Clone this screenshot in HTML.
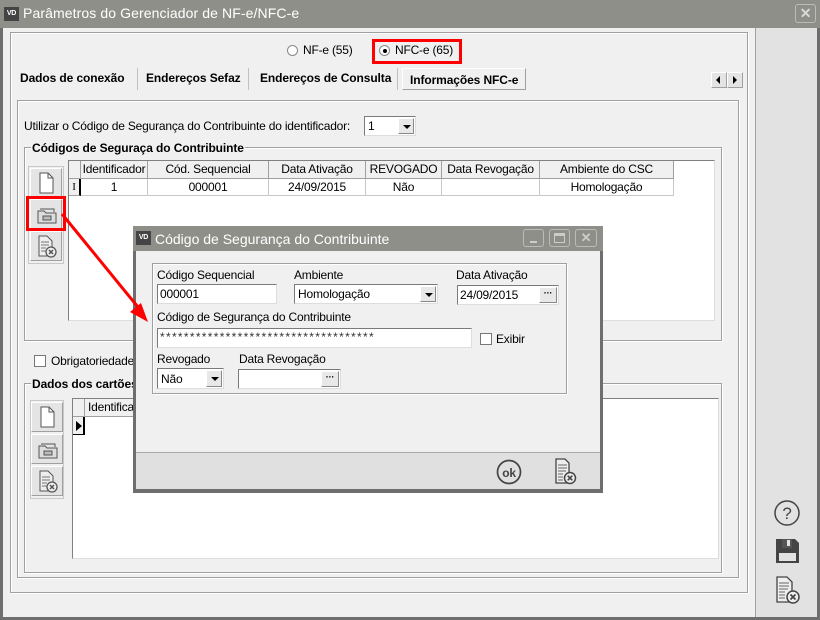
<!DOCTYPE html>
<html><head><meta charset="utf-8">
<style>
*{box-sizing:border-box;margin:0;padding:0}
body{width:820px;height:620px;overflow:hidden;background:#6e6e6e;font-family:"Liberation Sans",sans-serif;font-size:12px;letter-spacing:-0.2px;color:#000;position:relative}
.a{position:absolute}
.f{border:1px solid #a0a0a0;box-shadow:1px 1px 0 #fff, inset 1px 1px 0 #fff}
.in{background:#fff;border:1px solid #7a7a7a;border-right-color:#ddd;border-bottom-color:#ddd}
.btn{background:#e4e4e4;border:1px solid #fff;border-right-color:#a0a0a0;border-bottom-color:#a0a0a0}
.hd{background:#f0f0f0;border-right:1px solid #a0a0a0;border-bottom:1px solid #a0a0a0;text-align:center;line-height:17px;height:18px}
.cl{text-align:center;line-height:17px;height:17px;border-right:1px solid #c8c8c8;border-bottom:1px solid #c8c8c8}
.b{font-weight:bold;letter-spacing:-0.1px}
.dd{position:absolute;right:1px;top:1px;width:16px;background:#e8e8e8;border:1px solid #fff;border-right-color:#888;border-bottom-color:#888}
.dd:after{content:"";position:absolute;left:4px;top:6px;border:4px solid transparent;border-top:4px solid #000;border-bottom:0}
.dots{position:absolute;right:1px;top:1px;width:18px;background:#e8e8e8;border:1px solid #fff;border-right-color:#888;border-bottom-color:#888;font-size:9px;font-weight:bold;text-align:center;line-height:11px}
</style></head><body>
<div class="a" style="left:0;top:0;width:820px;height:28px;background:#8f8f8a"></div>
<div class="a" style="left:4px;top:7px;width:15px;height:14px;background:#444;color:#fff;font-size:7px;line-height:14px;text-align:center;font-weight:bold">VD</div>
<div class="a" style="left:23px;top:5px;font-size:14px;color:#fff;letter-spacing:0.1px">Parâmetros do Gerenciador de NF-e/NFC-e</div>
<div class="a" style="left:795px;top:4px;width:21px;height:19px;border:1px solid #bbb;border-radius:3px;background:#8f8f8a;color:#d8d8d8;font-weight:bold;text-align:center;line-height:17px;font-size:14px">✕</div>
<div class="a" style="left:3px;top:28px;width:814px;height:589px;background:#f0f0f0"></div>
<div class="a" style="left:755px;top:28px;width:62px;height:589px;background:#e2e2e2;border-left:1px solid #a0a0a0"></div>
<div class="a f" style="left:10px;top:32px;width:738px;height:561px"></div>
<div class="a f" style="left:17px;top:100px;width:722px;height:478px"></div>
<div class="a" style="left:287px;top:45px;width:11px;height:11px;border:1px solid #888;border-radius:50%;background:#fff"></div>
<div class="a" style="left:303px;top:43px">NF-e (55)</div>
<div class="a" style="left:372px;top:39px;width:90px;height:25px;border:3px solid #f00"></div>
<div class="a" style="left:379px;top:45px;width:11px;height:11px;border:1px solid #888;border-radius:50%;background:#fff"></div>
<div class="a" style="left:383px;top:49px;width:4px;height:4px;border-radius:50%;background:#000"></div>
<div class="a" style="left:395px;top:43px">NFC-e (65)</div>
<div class="a b" style="left:20px;top:71px">Dados de conexão</div>
<div class="a" style="left:137px;top:68px;height:22px;border-left:1px solid #c0c0c0"></div>
<div class="a b" style="left:146px;top:71px">Endereços Sefaz</div>
<div class="a" style="left:248px;top:68px;height:22px;border-left:1px solid #c0c0c0"></div>
<div class="a b" style="left:260px;top:71px">Endereços de Consulta</div>
<div class="a" style="left:397px;top:68px;height:22px;border-left:1px solid #c0c0c0"></div>
<div class="a b" style="left:402px;top:68px;width:124px;height:22px;border:1px solid #a0a0a0;border-top-color:#fff;border-left-color:#fff;padding:4px 0 0 7px;background:#f0f0f0">Informações NFC-e</div>
<div class="a btn" style="left:711px;top:72px;width:16px;height:16px"><div class="a" style="left:4px;top:3px;border:4px solid transparent;border-right:4px solid #000;border-left:0"></div></div>
<div class="a btn" style="left:727px;top:72px;width:16px;height:16px"><div class="a" style="left:5px;top:3px;border:4px solid transparent;border-left:4px solid #000;border-right:0"></div></div>
<div class="a" style="left:24px;top:119px">Utilizar o Código de Segurança do Contribuinte do identificador:</div>
<div class="a in" style="left:364px;top:116px;width:52px;height:20px;padding:2px 3px">1<div class="dd" style="height:16px"></div></div>
<div class="a f" style="left:24px;top:147px;width:698px;height:194px"></div>
<div class="a b" style="left:31px;top:141px;background:#f0f0f0;padding:0 1px">Códigos de Seguraça do Contribuinte</div>
<svg width="0" height="0" style="position:absolute"><defs>
<g id="doc"><path d="M9 4h8l5 5v15H9z" fill="#fff" stroke="#555"/><path d="M17 4v5h5" fill="none" stroke="#555"/></g>
<g id="fold"><path d="M7 11h6l2 2h10v10H7z" fill="#ddd" stroke="#555"/><path d="M9 9h14v3" fill="none" stroke="#555"/><rect x="12" y="16" width="8" height="4" fill="#bbb" stroke="#555"/></g>
<g id="del"><path d="M8 4h8l5 5v15H8z" fill="#eee" stroke="#555"/><path d="M10 10h8M10 13h8M10 16h5M10 19h5" stroke="#777"/><circle cx="20" cy="20" r="5" fill="#eee" stroke="#555" stroke-width="1.3"/><path d="M18 18l4 4M22 18l-4 4" stroke="#555" stroke-width="1.5"/></g>
</defs></svg>
<div class="a" style="left:28px;top:166px;width:36px;height:98px;border:1px solid #c8c8c8"></div>
<div class="a btn" style="left:30px;top:168px;width:32px;height:30px"><svg width="30" height="28"><use href="#doc"/></svg></div>
<div class="a btn" style="left:30px;top:199px;width:32px;height:30px"><svg width="30" height="28"><use href="#fold"/></svg></div>
<div class="a btn" style="left:30px;top:231px;width:32px;height:30px"><svg width="30" height="28"><use href="#del"/></svg></div>
<div class="a" style="left:26px;top:196px;width:40px;height:35px;border:3px solid #f00"></div>
<div class="a" style="left:68px;top:160px;width:647px;height:161px;background:#fff;border:1px solid #808080;border-right-color:#ddd;border-bottom-color:#ddd"></div>
<div class="a hd" style="left:69px;top:161px;width:12px"></div>
<div class="a hd" style="left:81px;top:161px;width:67px">Identificador</div>
<div class="a hd" style="left:148px;top:161px;width:121px">Cód. Sequencial</div>
<div class="a hd" style="left:269px;top:161px;width:97px">Data Ativação</div>
<div class="a hd" style="left:366px;top:161px;width:76px">REVOGADO</div>
<div class="a hd" style="left:442px;top:161px;width:98px">Data Revogação</div>
<div class="a hd" style="left:540px;top:161px;width:134px">Ambiente do CSC</div>
<div class="a" style="left:69px;top:179px;width:12px;height:17px;background:#f0f0f0;border-right:2px solid #000;border-bottom:1px solid #a0a0a0;font-size:11px;text-align:center;line-height:16px;font-family:'Liberation Serif'">I</div>
<div class="a cl" style="left:81px;top:179px;width:67px">1</div>
<div class="a cl" style="left:148px;top:179px;width:121px">000001</div>
<div class="a cl" style="left:269px;top:179px;width:97px">24/09/2015</div>
<div class="a cl" style="left:366px;top:179px;width:76px">Não</div>
<div class="a cl" style="left:442px;top:179px;width:98px"></div>
<div class="a cl" style="left:540px;top:179px;width:134px">Homologação</div>
<div class="a" style="left:34px;top:355px;width:12px;height:12px;border:1px solid #777;background:#fff"></div>
<div class="a" style="left:51px;top:354px">Obrigatoriedade</div>
<div class="a f" style="left:24px;top:383px;width:698px;height:190px"></div>
<div class="a b" style="left:31px;top:377px;background:#f0f0f0;padding:0 1px">Dados dos cartões</div>
<div class="a" style="left:30px;top:400px;width:34px;height:99px;border:1px solid #c8c8c8"></div>
<div class="a btn" style="left:31px;top:402px;width:32px;height:30px"><svg width="30" height="28"><use href="#doc"/></svg></div>
<div class="a btn" style="left:31px;top:434px;width:32px;height:30px"><svg width="30" height="28"><use href="#fold"/></svg></div>
<div class="a btn" style="left:31px;top:466px;width:32px;height:30px"><svg width="30" height="28"><use href="#del"/></svg></div>
<div class="a" style="left:72px;top:398px;width:647px;height:161px;background:#fff;border:1px solid #808080;border-right-color:#ddd;border-bottom-color:#ddd"></div>
<div class="a hd" style="left:73px;top:399px;width:12px"></div>
<div class="a hd" style="left:85px;top:399px;width:60px;text-align:left;padding-left:3px">Identificador</div>
<div class="a" style="left:73px;top:417px;width:12px;height:18px;background:#f0f0f0;border-right:2px solid #000;border-bottom:1px solid #000"><div class="a" style="left:3px;top:4px;border:5px solid transparent;border-left:6px solid #000;border-right:0"></div></div>
<svg class="a" style="left:772px;top:498px" width="32" height="32"><circle cx="15" cy="15" r="12" fill="none" stroke="#444" stroke-width="1.5"/><text x="15" y="21" text-anchor="middle" font-family="Liberation Sans" font-size="17" fill="#444">?</text></svg>
<svg class="a" style="left:772px;top:536px" width="32" height="32"><path d="M4 3h19l4 4v20H4z" fill="#444"/><rect x="7" y="17" width="17" height="8" fill="#e2e2e2"/><rect x="10" y="3" width="10" height="9" fill="#555"/><rect x="15" y="4" width="3" height="6" fill="#e2e2e2"/></svg>
<svg class="a" style="left:771px;top:574px" width="34" height="34"><path d="M6 3h10l5 5v20H6z" fill="#eee" stroke="#444" stroke-width="1.3"/><path d="M8 9h10M8 12h10M8 15h9M8 18h6M8 21h6M8 24h6" stroke="#666"/><circle cx="22" cy="23" r="6" fill="#eee" stroke="#444" stroke-width="1.5"/><path d="M19.5 20.5l5 5M24.5 20.5l-5 5" stroke="#444" stroke-width="1.7"/></svg>
<div class="a" style="left:133px;top:226px;width:470px;height:267px;background:#6e6e6e"></div>
<div class="a" style="left:133px;top:226px;width:470px;height:25px;background:#8f8f8a"></div>
<div class="a" style="left:136px;top:231px;width:15px;height:14px;background:#444;color:#fff;font-size:7px;line-height:14px;text-align:center;font-weight:bold">VD</div>
<div class="a" style="left:155px;top:231px;font-size:14px;color:#fff;letter-spacing:0">Código de Segurança do Contribuinte</div>
<div class="a" style="left:523px;top:229px;width:21px;height:18px;border:1px solid #bbb;border-radius:3px"><div class="a" style="left:6px;top:11px;width:7px;height:2px;background:#ccc"></div></div>
<div class="a" style="left:549px;top:229px;width:21px;height:18px;border:1px solid #bbb;border-radius:3px"><div class="a" style="left:4px;top:3px;width:11px;height:10px;border:1px solid #ccc;border-top-width:3px"></div></div>
<div class="a" style="left:575px;top:229px;width:22px;height:18px;border:1px solid #bbb;border-radius:3px;color:#ccc;font-weight:bold;text-align:center;line-height:16px;font-size:13px">✕</div>
<div class="a" style="left:136px;top:251px;width:464px;height:238px;background:#f0f0f0"></div>
<div class="a" style="left:136px;top:452px;width:464px;height:37px;background:#e0e0e0;border-top:1px solid #aaa"></div>
<div class="a f" style="left:152px;top:263px;width:415px;height:131px"></div>
<div class="a" style="left:157px;top:268px">Código Sequencial</div>
<div class="a in" style="left:157px;top:284px;width:120px;height:20px;padding:2px 2px">000001</div>
<div class="a" style="left:294px;top:268px">Ambiente</div>
<div class="a in" style="left:294px;top:284px;width:144px;height:20px;padding:2px 3px">Homologação<div class="dd" style="height:16px"></div></div>
<div class="a" style="left:456px;top:268px">Data Ativação</div>
<div class="a in" style="left:457px;top:285px;width:102px;height:20px;padding:2px 2px">24/09/2015<div class="dots" style="height:16px">···</div></div>
<div class="a" style="left:157px;top:310px">Código de Segurança do Contribuinte</div>
<div class="a in" style="left:157px;top:328px;width:315px;height:20px;padding:0 2px;font-size:12px;letter-spacing:1.3px;line-height:16px;color:#333">************************************</div>
<div class="a" style="left:480px;top:333px;width:12px;height:12px;border:1px solid #777;background:#fff"></div>
<div class="a" style="left:496px;top:332px">Exibir</div>
<div class="a" style="left:157px;top:352px">Revogado</div>
<div class="a in" style="left:157px;top:368px;width:67px;height:21px;padding:3px 3px">Não<div class="dd" style="height:17px"></div></div>
<div class="a" style="left:239px;top:352px">Data Revogação</div>
<div class="a in" style="left:238px;top:369px;width:103px;height:20px"><div class="dots" style="height:16px">···</div></div>
<svg class="a" style="left:495px;top:458px" width="28" height="28"><circle cx="14" cy="14" r="11.5" fill="none" stroke="#444" stroke-width="1.7"/><text x="14" y="19" text-anchor="middle" font-family="Liberation Sans" font-weight="bold" font-size="12" fill="#444">ok</text></svg>
<svg class="a" style="left:552px;top:457px" width="30" height="30"><path d="M4 2h9l4 4v20H4z" fill="#eee" stroke="#444" stroke-width="1.3"/><path d="M6 8h9M6 11h9M6 14h8M6 17h5M6 20h5M6 23h5" stroke="#666"/><circle cx="18" cy="21" r="5.5" fill="#eee" stroke="#444" stroke-width="1.5"/><path d="M15.7 18.7l4.6 4.6M20.3 18.7l-4.6 4.6" stroke="#444" stroke-width="1.6"/></svg>
<svg class="a" style="left:0;top:0" width="200" height="340"><line x1="62" y1="214" x2="142" y2="312" stroke="#f00" stroke-width="3"/><path d="M148 322L130 312L141 303Z" fill="#f00"/></svg>
</body></html>
